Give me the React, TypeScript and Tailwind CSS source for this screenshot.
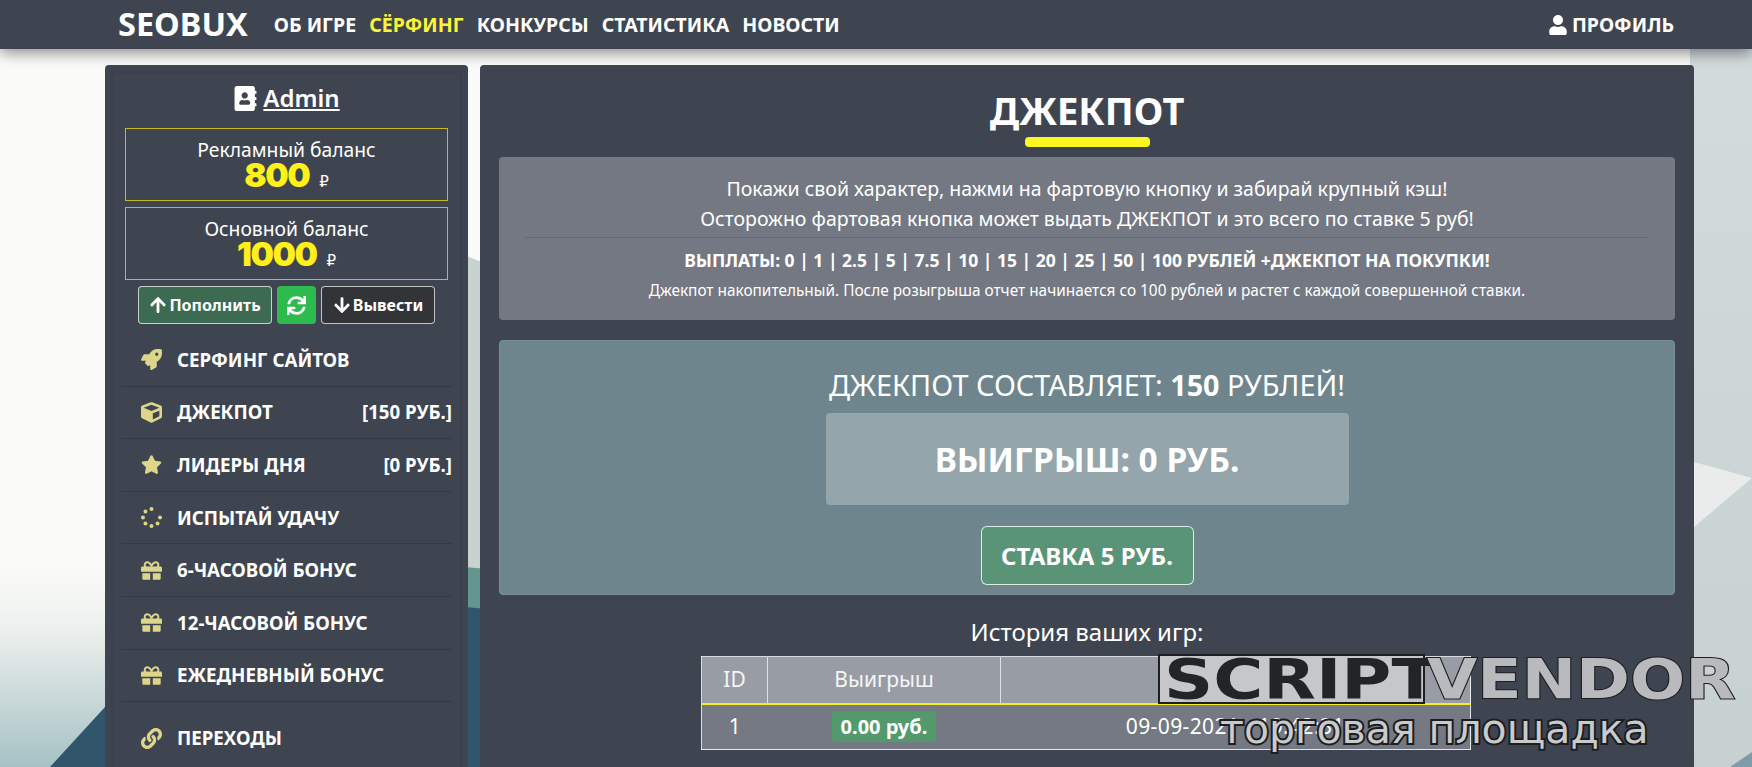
import type { ReactNode } from "react";
import {
  FaAddressBook,
  FaArrowDown,
  FaArrowUp,
  FaCube,
  FaGift,
  FaLink,
  FaRocket,
  FaSpinner,
  FaStar,
  FaSync,
  FaUser,
} from "react-icons/fa";

const nav = [
  { label: "ОБ ИГРЕ" },
  { label: "СЁРФИНГ", active: true },
  { label: "КОНКУРСЫ" },
  { label: "СТАТИСТИКА" },
  { label: "НОВОСТИ" },
];

const menu: { icon: ReactNode; label: string; right?: string }[] = [
  { icon: <FaRocket />, label: "СЕРФИНГ САЙТОВ" },
  { icon: <FaCube />, label: "ДЖЕКПОТ", right: "[150 РУБ.]" },
  { icon: <FaStar />, label: "ЛИДЕРЫ ДНЯ", right: "[0 РУБ.]" },
  { icon: <FaSpinner />, label: "ИСПЫТАЙ УДАЧУ" },
  { icon: <FaGift />, label: "6-ЧАСОВОЙ БОНУС" },
  { icon: <FaGift />, label: "12-ЧАСОВОЙ БОНУС" },
  { icon: <FaGift />, label: "ЕЖЕДНЕВНЫЙ БОНУС" },
];

const Backdrop = () => (
  <svg className="absolute inset-0 h-full w-full" viewBox="0 0 1752 767" preserveAspectRatio="none">
    <defs>
      <linearGradient id="fade" x1="0" y1="0" x2="0" y2="1">
        <stop offset="0" stopColor="#fbfbf9" stopOpacity="0" />
        <stop offset="0.45" stopColor="#e6ecea" />
        <stop offset="1" stopColor="#a6c2c4" />
      </linearGradient>
      <linearGradient id="slope" x1="0" y1="0" x2="0" y2="1">
        <stop offset="0" stopColor="#d3dbdc" />
        <stop offset="1" stopColor="#c7d1d2" />
      </linearGradient>
    </defs>
    <rect width="1752" height="767" fill="#fbfbf9" />
    <rect x="0" y="540" width="400" height="227" fill="url(#fade)" />
    <polygon points="466,256 482,262 482,767 466,767" fill="#c8d2cf" />
    <rect x="1690" y="49" width="62" height="718" fill="url(#slope)" />
    <polygon points="440,565 500,570 500,767 440,767" fill="#64958e" />
    <polygon points="440,605 500,610 500,767 440,767" fill="#31566c" />
    <polygon points="50,767 105,707 160,767" fill="#31566c" />
    <polygon points="1694,462 1752,478 1694,527" fill="#e9ecea" />
    <polygon points="1730,767 1752,752 1752,767" fill="#7d9caa" />
  </svg>
);

const Balance = ({ label, value }: { label: string; value: string }) => (
  <div className="flex h-[73px] flex-col items-center border border-[#c9b91c] pt-[9px]">
    <div className="text-[19.3px] leading-[24px] text-white">{label}</div>
    <div className="flex items-baseline gap-[10px] leading-[27px]">
      <span className="font-['Inter',sans-serif] text-[33px] font-black tracking-[-1.5px] text-[#fff01a]">{value}</span>
      <span className="font-['DejaVu_Sans',sans-serif] text-[15px] text-white">₽</span>
    </div>
  </div>
);

const Sidebar = () => (
  <aside className="w-[363px] shrink-0 rounded-t-[4px] bg-[#3f4550] px-[6px] pt-[6px]">
    <div className="h-[720px] border-x-2 border-t-2 border-[#3a414b] px-[12px] pt-[10px]">
      <div className="flex items-center justify-center gap-[5px] text-white">
        <FaAddressBook className="text-[25px]" />
        <a className="text-[24px] font-semibold leading-[30px] underline underline-offset-2">Admin</a>
      </div>
      <div className="mt-[15px] flex flex-col gap-[6px]">
        <Balance label="Рекламный баланс" value="800" />
        <Balance label="Основной баланс" value="1000" />
      </div>
      <div className="mt-[6px] flex justify-center gap-[5px] text-[16px] font-bold text-white">
        <button className="flex h-[38px] w-[134px] items-center justify-center gap-[2px] rounded-[4px] border border-white/70 bg-[#3c6b51]">
          <FaArrowUp className="text-[18px]" />
          Пополнить
        </button>
        <button className="flex h-[38px] w-[39px] items-center justify-center rounded-[4px] bg-[#2dba4e]">
          <FaSync className="text-[19px]" />
        </button>
        <button className="flex h-[38px] w-[114px] items-center justify-center gap-[2px] rounded-[4px] border border-white/70 bg-[#333437]">
          <FaArrowDown className="text-[18px]" />
          Вывести
        </button>
      </div>
      <ul className="mt-[10px] -mx-[4px]">
        {menu.map((m) => (
          <li key={m.label} className="flex h-[52.6px] items-center border-b border-[#343a43] pl-[20px] text-[18.7px] font-bold text-white">
            <span className="flex w-[36px] text-[21px] text-[#ddd68a]">{m.icon}</span>
            <span>{m.label}</span>
            {m.right && <span className="ml-auto">{m.right}</span>}
          </li>
        ))}
        <li className="mt-[10px] flex h-[52px] items-center pl-[20px] text-[18.7px] font-bold text-white">
          <span className="flex w-[36px] text-[21px] text-[#ddd68a]">
            <FaLink />
          </span>
          <span>ПЕРЕХОДЫ</span>
        </li>
      </ul>
    </div>
  </aside>
);

const Jackpot = () => (
  <main className="h-[720px] flex-1 rounded-t-[4px] bg-[#3f4550] px-[19px] text-white">
    <h1 className="mt-[21px] text-center text-[38px] font-bold leading-[48px]">ДЖЕКПОТ</h1>
    <div className="mx-auto mt-[3px] h-[10px] w-[125px] rounded-[4px] bg-[#fdf822]" />
    <section className="mt-[10px] h-[163px] rounded-[4px] bg-[#747882] px-[26px] pt-[17px] text-center">
      <p className="text-[19.5px] leading-[30px]">Покажи свой характер, нажми на фартовую кнопку и забирай крупный кэш!</p>
      <p className="text-[19.5px] leading-[30px]">Осторожно фартовая кнопка может выдать ДЖЕКПОТ и это всего по ставке 5 руб!</p>
      <hr className="mt-[3px] border-[#666a74]" />
      <p className="mt-[9px] text-[17.5px] font-bold leading-[26px]">
        ВЫПЛАТЫ: 0 | 1 | 2.5 | 5 | 7.5 | 10 | 15 | 20 | 25 | 50 | 100 РУБЛЕЙ +ДЖЕКПОТ НА ПОКУПКИ!
      </p>
      <p className="mt-[8px] text-[15.4px] leading-[20px]">
        Джекпот накопительный. После розыгрыша отчет начинается со 100 рублей и растет с каждой совершенной ставки.
      </p>
    </section>
    <section className="mt-[20px] flex h-[255px] flex-col items-center rounded-[4px] border border-[#7a8f97] bg-[#6f858d] pt-[23px]">
      <div className="text-[28.8px] leading-[42px]">
        ДЖЕКПОТ СОСТАВЛЯЕТ: <b className="font-bold">150</b> РУБЛЕЙ!
      </div>
      <div className="mt-[7px] flex h-[92px] w-[523px] items-center justify-center rounded-[4px] bg-[#94a5ac] text-[33.5px] font-bold">
        ВЫИГРЫШ: 0 РУБ.
      </div>
      <button className="mt-[21px] h-[59px] w-[213px] rounded-[6px] border border-white/80 bg-[#5a9477] text-[24px] font-bold">
        СТАВКА 5 РУБ.
      </button>
    </section>
    <div className="mt-[21px] text-center text-[24px] leading-[32px]">История ваших игр:</div>
    <table className="ml-[202px] mt-[8px] w-[770px] border border-white/80 text-center text-[21px]">
      <thead className="bg-[#989ca5] text-white/90">
        <tr className="h-[47px] border-b-2 border-[#f5ef26]">
          <th className="w-[66px] border-r border-white/70 font-normal">ID</th>
          <th className="w-[233px] border-r border-white/70 font-normal">Выигрыш</th>
          <th className="font-normal">Дата</th>
        </tr>
      </thead>
      <tbody className="bg-[#757983]">
        <tr className="h-[46px]">
          <td>1</td>
          <td>
            <span className="inline-block rounded-[4px] bg-[#529a6b] px-[9px] py-[3px] text-[20px] font-bold leading-[25px]">0.00 руб.</span>
          </td>
          <td className="tracking-[0.4px]">09-09-2021 - 19:42:31</td>
        </tr>
      </tbody>
    </table>
  </main>
);

const Watermark = () => (
  <div className="absolute left-[1158px] top-[654px] h-[100px] w-[580px] font-['DejaVu_Sans',sans-serif]">
    <div className="absolute left-0 top-0 h-[50px] w-[267px] border-2 border-[#1d1e20] bg-[#c5c7cb]" />
    <div className="absolute left-[6px] top-[-12px] origin-left scale-x-[1.22] text-[56px] font-bold leading-[74px] text-[#222427]">
      SCRIPT
    </div>
    <div className="absolute left-[269px] top-[-12px] origin-left scale-x-[1.16] text-[56px] font-bold leading-[74px] text-[#b9babd] [-webkit-text-stroke:2px_#1d1e20] [paint-order:stroke_fill]">
      VENDOR
    </div>
    <div className="absolute left-[62px] top-[50px] text-[41px] leading-[50px] text-[#c9cacc] [-webkit-text-stroke:4px_#1d1e20] [paint-order:stroke_fill]">
      торговая площадка
    </div>
  </div>
);

export default function App() {
  return (
    <div className="relative h-[767px] overflow-hidden font-['Noto_Sans',sans-serif]">
      <Backdrop />
      <div className="relative">
        <header className="flex h-[49px] items-center bg-[#3f4550] pl-[118px] pr-[78px] text-white shadow-[0_4px_14px_rgba(0,0,0,0.45)]">
          <div className="mr-[26px] text-[32.5px] font-bold leading-none">SEOBUX</div>
          <nav className="flex gap-[13px] text-[19.5px] font-bold">
            {nav.map((n) => (
              <a key={n.label} className={n.active ? "text-[#fdf43a]" : ""}>
                {n.label}
              </a>
            ))}
          </nav>
          <a className="ml-auto flex items-center gap-[4px] text-[19.5px] font-bold">
            <FaUser className="text-[20px]" />
            ПРОФИЛЬ
          </a>
        </header>
        <div className="mt-[16px] flex gap-[12px] pl-[105px] pr-[58px]">
          <Sidebar />
          <Jackpot />
        </div>
      </div>
      <Watermark />
    </div>
  );
}
